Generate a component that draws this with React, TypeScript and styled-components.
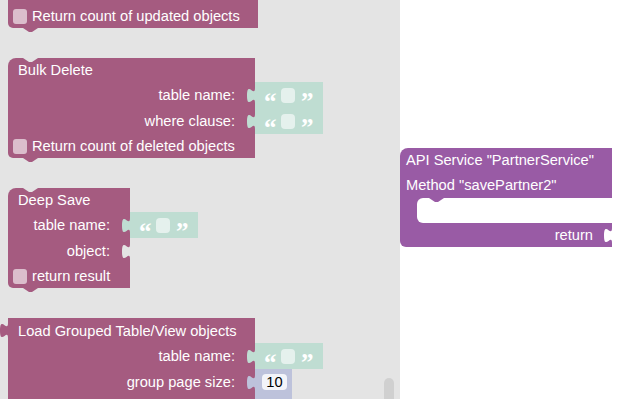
import styled, { createGlobalStyle } from 'styled-components';

// colours taken from the blockly palette
const MAGENTA = '#a55b80';
const PURPLE = '#995ba5';
const FLYOUT_BG = '#e4e4e4';
const TEXT_SHADOW = '#bfddd2';
const NUM_SHADOW = '#bdc2db';

const GlobalStyle = createGlobalStyle`
  html, body {
    margin: 0;
    padding: 0;
  }
  body {
    font-family: "Liberation Sans", Arial, sans-serif;
  }
`;

const Page = styled.div`
  display: flex;
  width: 639px;
  height: 399px;
  overflow: hidden;
  font-family: "Liberation Sans", Arial, sans-serif;
  font-size: 14.67px;
  color: #fff;
`;

const Flyout = styled.div`
  position: relative;
  width: 400px;
  flex-shrink: 0;
  box-sizing: border-box;
  padding-left: 8px;
  background: ${FLYOUT_BG};
  display: flex;
  flex-direction: column;
  align-items: flex-start;
  gap: 30px;
  overflow: hidden;
`;

const Workspace = styled.div`
  position: relative;
  flex: 1;
  background: #fff;
`;

// workspace block sits on a free canvas
const CanvasBlock = styled.div<{ $x: number; $y: number }>`
  position: absolute;
  left: ${(p) => p.$x}px;
  top: ${(p) => p.$y}px;
`;

const Block = styled.div`
  display: flex;
  flex-direction: column;
  align-items: flex-start;
  flex-shrink: 0;
`;

const Row = styled.div<{ $h: number }>`
  display: flex;
  align-items: flex-start;
  height: ${(p) => p.$h}px;
`;

interface SegProps {
  $w: number;
  $h?: number;
  $c: string;
  $end?: boolean;
  $pl?: number;
  $pt?: number;
  $radius?: string;
  $notch?: boolean;
  $tab?: boolean;
}

const Seg = styled.div<SegProps>`
  position: relative;
  box-sizing: border-box;
  width: ${(p) => p.$w}px;
  height: ${(p) => (p.$h ? `${p.$h}px` : '100%')};
  flex-shrink: 0;
  background: ${(p) => p.$c};
  display: flex;
  align-items: center;
  justify-content: ${(p) => (p.$end ? 'flex-end' : 'flex-start')};
  padding-left: ${(p) => p.$pl ?? 0}px;
  padding-top: ${(p) => p.$pt ?? 0}px;
  border-radius: ${(p) => p.$radius ?? '0'};
  white-space: nowrap;

  ${(p) =>
    p.$notch &&
    `&::before {
      content: '';
      position: absolute;
      top: 0;
      left: 15px;
      width: 15px;
      height: 4px;
      background: ${FLYOUT_BG};
      clip-path: polygon(0 0, 100% 0, 60% 100%, 40% 100%);
    }`}

  ${(p) =>
    p.$tab &&
    `&::after {
      content: '';
      position: absolute;
      top: 100%;
      left: 15px;
      width: 15px;
      height: 4px;
      background: ${p.$c};
      clip-path: polygon(0 0, 100% 0, 60% 100%, 40% 100%);
    }`}
`;

const Check = styled.div`
  width: 14px;
  height: 15px;
  border-radius: 3px;
  background: #dbbdcc;
  margin-right: 5px;
  flex-shrink: 0;
`;

const SocketWrap = styled.div<{ $ml: number }>`
  display: flex;
  margin-left: ${(p) => p.$ml}px;
  width: 8px;
  height: 15px;
`;

const OutputWrap = styled.div`
  position: absolute;
  left: -8px;
  top: 5px;
  display: flex;
`;

const TabShape = ({ fill }: { fill: string }) => (
  <svg width="8" height="15" viewBox="0 0 8 15" style={{ overflow: 'visible' }}>
    <path d="M8,0 C8,10 0,-8 0,7.5 C0,23 8,5 8,15 Z" fill={fill} />
  </svg>
);

const Socket = ({ fill, ml = 12 }: { fill: string; ml?: number }) => (
  <SocketWrap $ml={ml}>
    <TabShape fill={fill} />
  </SocketWrap>
);

const TextShadow = styled.div`
  width: 68px;
  height: 26px;
  box-sizing: border-box;
  padding-left: 9px;
  flex-shrink: 0;
  background: ${TEXT_SHADOW};
  display: flex;
  align-items: center;
`;

const Quote = styled.span<{ $gap: number }>`
  font-family: "Liberation Serif", "Times New Roman", serif;
  font-weight: bold;
  font-size: 25px;
  line-height: 25px;
  height: 25px;
  width: 12px;
  margin-right: ${(p) => p.$gap}px;
  transform: translateY(6px);
  color: #fff;
`;

const EmptyField = styled.div`
  width: 14px;
  height: 15px;
  border-radius: 4px;
  background: #e5f1ed;
  margin-right: 6px;
`;

const NumShadow = styled.div`
  width: 37px;
  height: 30px;
  box-sizing: border-box;
  padding: 5px 0 0 7px;
  flex-shrink: 0;
  background: ${NUM_SHADOW};
  display: flex;
  align-items: flex-start;
`;

const NumField = styled.div`
  width: 25px;
  height: 16px;
  border-radius: 4px;
  background: #f3f4f9;
  color: #000;
  display: flex;
  align-items: center;
  justify-content: center;
  line-height: 16px;
`;

const StatementSlot = styled.div`
  position: relative;
  flex: 1;
  height: 100%;
  margin-left: 17px;
  background: #fff;
  border-radius: 6px 0 0 6px;

  &::before {
    content: '';
    position: absolute;
    top: 0;
    left: 12px;
    width: 15px;
    height: 4px;
    background: ${PURPLE};
    clip-path: polygon(0 0, 100% 0, 60% 100%, 40% 100%);
  }
`;

const Scrollbar = styled.div`
  position: absolute;
  left: 384px;
  top: 378px;
  width: 10px;
  height: 40px;
  border-radius: 5px;
  background: #d0d0d0;
`;

const StringInput = () => (
  <TextShadow>
    <Quote $gap={5}>“</Quote>
    <EmptyField />
    <Quote $gap={0}>”</Quote>
  </TextShadow>
);

const InputRow = ({ w, label, children }: { w: number; label: string; children?: React.ReactNode }) => (
  <Row $h={26}>
    <Seg $w={w} $c={MAGENTA} $end>
      {label}
      <Socket fill={children ? TEXT_SHADOW : FLYOUT_BG} />
    </Seg>
    {children}
  </Row>
);

const App = () => {
  return (
    <>
      <GlobalStyle />
      <Page>
        <Flyout>
          <Block>
            <Seg $w={250} $h={28} $pt={4} $pl={5} $c={MAGENTA} $radius="0 0 0 5px" $tab>
              <Check />
              Return count of updated objects
            </Seg>
          </Block>

          <Block>
            <Seg $w={247} $h={24} $pl={10} $c={MAGENTA} $radius="8px 0 0 0" $notch>
              Bulk Delete
            </Seg>
            <InputRow w={247} label="table name:">
              <StringInput />
            </InputRow>
            <InputRow w={247} label="where clause:">
              <StringInput />
            </InputRow>
            <Seg $w={247} $h={24} $pl={5} $c={MAGENTA} $radius="0 0 0 5px" $tab>
              <Check />
              Return count of deleted objects
            </Seg>
          </Block>

          <Block>
            <Seg $w={122} $h={24} $pl={10} $c={MAGENTA} $radius="8px 0 0 0" $notch>
              Deep Save
            </Seg>
            <InputRow w={122} label="table name:">
              <StringInput />
            </InputRow>
            <InputRow w={122} label="object:" />
            <Seg $w={122} $h={24} $pl={5} $c={MAGENTA} $radius="0 0 0 5px" $tab>
              <Check />
              return result
            </Seg>
          </Block>

          <Block>
            <Seg $w={247} $h={25} $pl={10} $c={MAGENTA}>
              <OutputWrap>
                <TabShape fill={MAGENTA} />
              </OutputWrap>
              Load Grouped Table/View objects
            </Seg>
            <InputRow w={247} label="table name:">
              <StringInput />
            </InputRow>
            <Row $h={26}>
              <Seg $w={247} $c={MAGENTA} $end>
                group page size:
                <Socket fill={NUM_SHADOW} />
              </Seg>
              <NumShadow>
                <NumField>10</NumField>
              </NumShadow>
            </Row>
            <Seg $w={247} $h={26} $c={MAGENTA} />
          </Block>

          <Scrollbar />
        </Flyout>

        <Workspace>
          <CanvasBlock $x={0} $y={148}>
            <Block>
              <Seg $w={212} $h={24} $pl={6} $c={PURPLE} $radius="8px 0 0 0">
                API Service "PartnerService"
              </Seg>
              <Seg $w={212} $h={26} $pl={6} $c={PURPLE}>
                Method "savePartner2"
              </Seg>
              <Seg $w={212} $h={25} $c={PURPLE}>
                <StatementSlot />
              </Seg>
              <Seg $w={212} $h={24} $c={PURPLE} $end $radius="0 0 0 6px">
                return
                <Socket fill="#fff" ml={11} />
              </Seg>
            </Block>
          </CanvasBlock>
        </Workspace>
      </Page>
    </>
  );
};

export default App;
